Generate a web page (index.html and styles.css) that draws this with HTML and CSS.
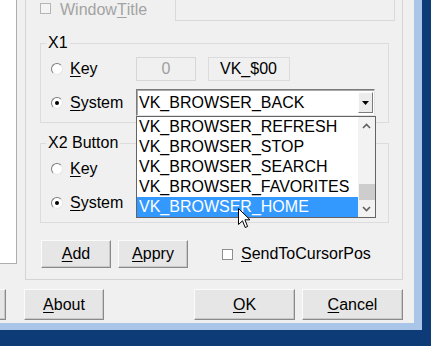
FILE: index.html
```html
<!DOCTYPE html>
<html lang="en">
<head>
    <meta charset="UTF-8">
    <title>Button Settings</title>
    <link rel="stylesheet" href="styles.css">
</head>
<body>

<div class="desktop">
    <div class="window">
        <div class="client">
            <div class="main">
                <div class="side-list"></div>

                <div class="tab-page">
                    <div class="top-row">
                        <label class="check disabled"><span class="box"></span>Window<u>T</u>itle</label>
                        <div class="title-box"></div>
                    </div>

                    <!-- X1 -->
                    <div class="group">
                        <span class="group-title">X1</span>
                        <div class="row">
                            <label class="opt"><span class="radio"></span><u>K</u>ey</label>
                            <div class="edit">0</div>
                            <div class="code">VK_$00</div>
                        </div>
                        <div class="row row-sys">
                            <label class="opt"><span class="radio on"></span><u>S</u>ystem</label>
                            <div class="combo">
                                <span class="combo-text">VK_BROWSER_BACK</span>
                                <span class="combo-btn">
                                    <svg width="7" height="4" viewBox="0 0 7 4"><path d="M0 0h7L3.5 4z" fill="#000"/></svg>
                                </span>
                                <div class="drop">
                                    <ul class="drop-items">
                                        <li>VK_BROWSER_REFRESH</li>
                                        <li>VK_BROWSER_STOP</li>
                                        <li>VK_BROWSER_SEARCH</li>
                                        <li>VK_BROWSER_FAVORITES</li>
                                        <li class="selected">VK_BROWSER_HOME</li>
                                    </ul>
                                    <div class="scroll">
                                        <div class="arrow">
                                            <svg width="9" height="6" viewBox="0 0 9 6"><path d="M1 5L4.5 1.5L8 5" fill="none" stroke="#606060" stroke-width="1.6"/></svg>
                                        </div>
                                        <div class="track"><div class="thumb"></div></div>
                                        <div class="arrow">
                                            <svg width="9" height="6" viewBox="0 0 9 6"><path d="M1 1L4.5 4.5L8 1" fill="none" stroke="#606060" stroke-width="1.6"/></svg>
                                        </div>
                                    </div>
                                </div>
                            </div>
                        </div>
                    </div>

                    <!-- X2 Button (its fields sit under the open list) -->
                    <div class="group x2">
                        <span class="group-title">X2 Button</span>
                        <div class="row">
                            <label class="opt"><span class="radio"></span><u>K</u>ey</label>
                            <div class="edit"></div>
                            <div class="code"></div>
                        </div>
                        <div class="row row-sys">
                            <label class="opt"><span class="radio on"></span><u>S</u>ystem</label>
                            <div class="combo"></div>
                        </div>
                    </div>

                    <div class="actions">
                        <button class="btn small"><u>A</u>dd</button>
                        <button class="btn small gap"><u>A</u>ppry</button>
                        <label class="check send"><span class="box"></span><u>S</u>endToCursorPos</label>
                    </div>
                </div>
            </div>

            <div class="footer">
                <button class="btn cut"></button>
                <button class="btn about"><u>A</u>bout</button>
                <button class="btn wide ok"><u>O</u>K</button>
                <button class="btn wide cancel"><u>C</u>ancel</button>
            </div>
        </div>
    </div>

    <svg class="cursor" width="13" height="21" viewBox="0 0 13 21">
        <path d="M0.5 0.5V16.5L4.5 12.8L7.2 19.5L9.6 18.5L6.9 11.8H12Z" fill="#fff" stroke="#000" stroke-width="1" stroke-linejoin="miter"/>
    </svg>
</div>

</body>
</html>
```

FILE: styles.css
```css
body {
    margin: 0;
    overflow: hidden;
    font-family: "Liberation Sans", Arial, sans-serif;
    font-size: 16px;
    color: #000;
}
.desktop {
    position: relative;
    width: 431px;
    height: 346px;
    background-color: #0d3b78;
}
.window {
    width: 414px;
    padding: 0 8px 7px 0;
    background-color: #a9c6e9;
}
.client {
    width: 414px;
    height: 323px;
    background-color: #f0f0f0;
}
u {
    text-underline-offset: 2px;
}

/* upper part */
.main {
    display: flex;
    align-items: flex-start;
    height: 280px;
}
.side-list {
    width: 16px;
    height: 263px;
    background-color: #fff;
    border-right: 1px solid #adadad;
    border-bottom: 1px solid #adadad;
}
.tab-page {
    width: 378px;
    height: 280px;
    box-sizing: border-box;
    margin-left: 8px;
    border: 1px solid #d4d4d4;
    border-top: 0;
}
.top-row {
    display: flex;
    align-items: flex-start;
    height: 21px;
}
.title-box {
    width: 220px;
    height: 21px;
    box-sizing: border-box;
    margin-left: auto;
    margin-right: 7px;
    border: 1px solid #d9d9d9;
    border-top: 0;
}

/* check boxes */
.check {
    display: flex;
    align-items: center;
    line-height: 20px;
    white-space: nowrap;
}
.check .box {
    width: 11px;
    height: 11px;
    box-sizing: border-box;
    border: 1px solid #8e8f8f;
    background-color: #fff;
}
.check.disabled {
    margin-left: 14px;
    color: #a3a3a3;
}
.check.disabled .box {
    align-self: flex-start;
    margin: 3px 9px 0 0;
    border-color: #b5b5b5;
    background-color: #f4f4f4;
}
.check.send {
    margin-left: 34px;
}
.check.send .box {
    margin-right: 8px;
}

/* group boxes */
.group {
    position: relative;
    width: 349px;
    height: 80px;
    box-sizing: border-box;
    margin: 22px 0 0 14px;
    padding: 13px 0 0 10px;
    border: 1px solid #dcdcdc;
}
.group.x2 {
    margin-top: 20px;
}
.group-title {
    position: absolute;
    left: 5px;
    top: -11px;
    padding: 0 2px;
    line-height: 20px;
    background-color: #f0f0f0;
}
.row {
    display: flex;
    align-items: center;
    height: 24px;
}
.row-sys {
    height: 27px;
    margin-top: 8px;
}
.opt {
    display: flex;
    align-items: center;
    width: 85px;
    line-height: 20px;
}
.radio {
    position: relative;
    width: 12px;
    height: 12px;
    box-sizing: border-box;
    margin-right: 7px;
    border: 1px solid;
    border-color: #7d7d7d #e6e6e6 #e6e6e6 #7d7d7d;
    border-radius: 50%;
    background-color: #fff;
}
.radio.on::after {
    content: "";
    position: absolute;
    left: 3px;
    top: 3px;
    width: 4px;
    height: 4px;
    border-radius: 50%;
    background-color: #000;
}
.edit {
    width: 60px;
    height: 24px;
    box-sizing: border-box;
    border: 1px solid #d7d7d7;
    color: #a0a0a0;
    text-align: center;
    line-height: 22px;
}
.code {
    width: 82px;
    height: 24px;
    box-sizing: border-box;
    margin-left: 12px;
    padding-left: 11px;
    border: 1px solid #dcdcdc;
    line-height: 22px;
}

/* combo box */
.combo {
    position: relative;
    display: flex;
    align-items: center;
    width: 239px;
    height: 27px;
    box-sizing: border-box;
    padding: 2px 1px 2px 2px;
    border: 1px solid;
    border-color: #7a7a7a #e3e3e3 #e3e3e3 #7a7a7a;
    box-shadow: inset 1px 1px 0 #a9a9a9;
    background-color: #fff;
    line-height: 20px;
}
.combo-text {
    flex: 1;
}
.combo-btn {
    display: flex;
    align-items: center;
    justify-content: center;
    width: 15px;
    height: 21px;
    box-sizing: border-box;
    border: 1px solid;
    border-color: #fdfdfd #7c7c7c #7c7c7c #fdfdfd;
    background-color: #ececec;
}
.drop {
    position: absolute;
    left: -1px;
    top: 26px;
    z-index: 10;
    display: flex;
    width: 240px;
    height: 102px;
    box-sizing: border-box;
    border: 1px solid #646464;
    background-color: #fff;
}
.drop-items {
    flex: 1;
    margin: 0;
    padding: 0;
    list-style: none;
}
.drop-items li {
    height: 20px;
    padding-left: 2px;
    line-height: 20px;
    white-space: nowrap;
}
.drop-items li.selected {
    background-color: #3399ff;
    color: #fff;
}
.scroll {
    display: flex;
    flex-direction: column;
    width: 17px;
    background-color: #f2f2f2;
}
.arrow {
    display: flex;
    align-items: center;
    justify-content: center;
    height: 17px;
}
.track {
    display: flex;
    flex: 1;
    flex-direction: column;
    justify-content: flex-end;
}
.thumb {
    height: 16px;
    margin-left: 1px;
    background-color: #cdcdcd;
}

/* buttons */
.btn {
    height: 31px;
    box-sizing: border-box;
    padding: 0;
    border: 1px solid;
    border-color: #fbfbfb #8a8a8a #8a8a8a #fbfbfb;
    box-shadow: inset -1px -1px 0 #c9c9c9;
    background-color: #e6e6e6;
    font-family: inherit;
    font-size: 16px;
    color: #000;
}
.actions {
    display: flex;
    align-items: center;
    height: 28px;
    margin-top: 17px;
    padding-left: 15px;
}
.btn.small {
    width: 70px;
    height: 28px;
}
.btn.gap {
    margin-left: 7px;
}
.footer {
    display: flex;
    height: 31px;
    margin-top: 9px;
}
.btn.cut {
    width: 80px;
    margin-left: -74px;
}
.btn.about {
    width: 80px;
    margin-left: 18px;
}
.btn.wide {
    width: 101px;
}
.btn.ok {
    margin-left: auto;
}
.btn.cancel {
    margin-left: 7px;
    margin-right: 11px;
}

.cursor {
    position: absolute;
    left: 238px;
    top: 208px;
    z-index: 20;
}
```
